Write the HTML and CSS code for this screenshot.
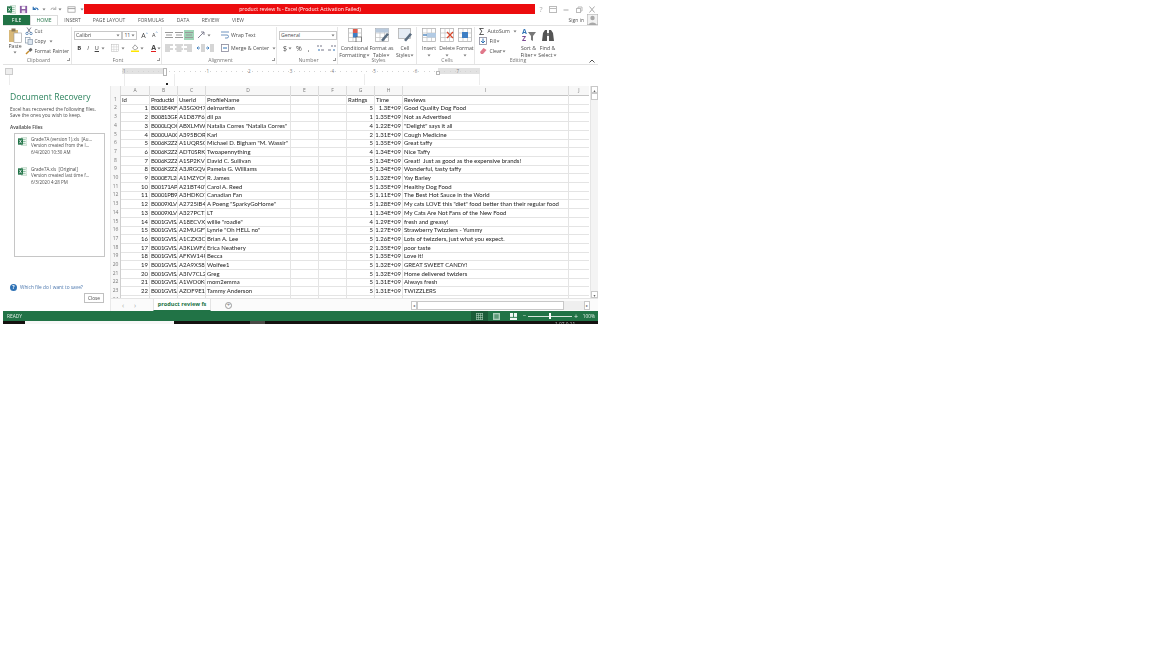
FILE: index.html
```html
<!DOCTYPE html>
<html lang="en">
<head>
  <meta charset="UTF-8">
  <title>product review fs - Excel</title>
  <link rel="stylesheet" href="styles.css">
</head>
<body>

  <svg class="defs" width="0" height="0">
    <symbol id="xl" viewBox="0 0 10 10">
      <rect x="4" y="1" width="6" height="8" fill="#fff" stroke="#7fb08f" stroke-width=".6"/>
      <path d="M5.5 3h3M5.5 5h3M5.5 7h3" stroke="#4d9a6b" stroke-width=".7"/>
      <rect x="0" y="1.5" width="5.5" height="7" fill="#1e7145"/>
      <path d="M1.4 3l2.6 4M4 3L1.4 7" stroke="#fff" stroke-width=".8"/>
    </symbol>
    <symbol id="caret" viewBox="0 0 4 3"><path d="M.5 .5h3L2 2.5z" fill="#777"/></symbol>
    <symbol id="lines" viewBox="0 0 8 8"><path d="M0 1.5h8M1 4h6M0 6.5h8" stroke="#999" stroke-width="1"/></symbol>
    <symbol id="grid" viewBox="0 0 14 14">
      <rect x=".5" y=".5" width="13" height="13" fill="#fff" stroke="#a8a8a8" stroke-width=".7"/>
      <path d="M.5 5h13M.5 9.5h13M5 .5v13M9.5 .5v13" stroke="#c2c2c2" stroke-width=".7"/>
    </symbol>
  </svg>

  <div class="app">

    <!-- title bar -->
    <div class="titlebar">
      <div class="qat">
        <svg class="qi" viewBox="0 0 10 10"><use href="#xl"/></svg>
        <svg class="qi" viewBox="0 0 10 10"><rect x="1" y="1" width="8" height="8" fill="#8a5ba3"/><rect x="3" y="1.5" width="4" height="3" fill="#fff"/><rect x="3" y="6" width="4" height="3" fill="#e6dcec"/></svg>
        <svg class="qi" viewBox="0 0 10 10"><path d="M2.5 2v3h3M3 5c1-2 4-2.500 5 .5" fill="none" stroke="#2f72b5" stroke-width="1.300"/></svg>
        <svg class="qc"><use href="#caret"/></svg>
        <svg class="qi gap" viewBox="0 0 10 10"><path d="M7.500 2v3h-3M7 5c-1-2-4-2.500-5 .5" fill="none" stroke="#bbb" stroke-width="1.200"/></svg>
        <svg class="qc"><use href="#caret"/></svg>
        <svg class="qi gap2" viewBox="0 0 10 10"><rect x="1" y="2" width="8" height="6" fill="#fff" stroke="#999" stroke-width=".8"/><path d="M1 4h8" stroke="#999"/></svg>
        <svg class="qc ml3"><use href="#caret"/></svg>
      </div>
      <div class="redbar">product review fs - Excel (Product Activation Failed)</div>
      <div class="winbtns">
        <span>?</span>
        <svg viewBox="0 0 8 7"><rect x=".5" y=".5" width="7" height="6" fill="none" stroke="#bbb"/><path d="M.5 2.500h7" stroke="#bbb"/></svg>
        <svg viewBox="0 0 8 7"><path d="M1.500 4h5" stroke="#aaa"/></svg>
        <svg viewBox="0 0 8 7"><rect x="1.500" y="2.500" width="4" height="4" fill="none" stroke="#bbb"/><path d="M3 2.500V1h4v4H5.500" fill="none" stroke="#bbb"/></svg>
        <svg viewBox="0 0 8 7"><path d="M1.500 .5l5 6M6.500 .5l-5 6" stroke="#aaa"/></svg>
      </div>
    </div>

    <!-- tabs -->
    <div class="tabs">
      <span class="tab file">FILE</span>
      <span class="tab home">HOME</span>
      <span class="tab t-insert">INSERT</span>
      <span class="tab t-page">PAGE LAYOUT</span>
      <span class="tab t-form">FORMULAS</span>
      <span class="tab t-data">DATA</span>
      <span class="tab t-rev">REVIEW</span>
      <span class="tab t-view">VIEW</span>
      <span class="signin">Sign in</span>
      <svg class="avatar" viewBox="0 0 11 11"><rect width="11" height="11" fill="#f2f2f2" stroke="#aaa"/><circle cx="5.500" cy="4" r="2.200" fill="#a8a8a8"/><path d="M1.500 11c0-3.500 8-3.500 8 0z" fill="#a8a8a8"/></svg>
    </div>

    <!-- ribbon -->
    <div class="ribbon">

      <div class="group g-clip">
        <div class="gbody clip-body">
          <div class="paste">
            <svg class="paste-ic" viewBox="0 0 14 15"><rect x="1" y="2" width="9" height="12" fill="#d8b878"/><rect x="3.500" y=".5" width="4" height="3" fill="#8a7a5a"/><rect x="6" y="5" width="7.500" height="9.500" fill="#fff" stroke="#999" stroke-width=".6"/></svg>
            <span>Paste</span>
            <svg class="car"><use href="#caret"/></svg>
          </div>
          <div class="clip-list">
            <div class="rrow"><svg class="si" viewBox="0 0 8 8"><path d="M2 .5l3.500 5M6 .5L2.500 5.500" stroke="#667" stroke-width=".8"/><circle cx="2" cy="6.500" r="1.200" fill="none" stroke="#3b6ea5" stroke-width=".7"/><circle cx="6" cy="6.500" r="1.200" fill="none" stroke="#3b6ea5" stroke-width=".7"/></svg>Cut</div>
            <div class="rrow"><svg class="si" viewBox="0 0 8 8"><rect x=".5" y=".5" width="4.500" height="5.500" fill="#fff" stroke="#89a" stroke-width=".7"/><rect x="3" y="2.500" width="4.500" height="5" fill="#dde6f0" stroke="#89a" stroke-width=".7"/></svg>Copy<svg class="car ml3"><use href="#caret"/></svg></div>
            <div class="rrow"><svg class="si" viewBox="0 0 8 8"><path d="M1 7l3-3" stroke="#c58a2a" stroke-width="1.400"/><path d="M3.500 2.500L6 .8 7.500 3 5 5z" fill="#666"/></svg>Format Painter</div>
          </div>
        </div>
        <div class="glabel">Clipboard<i class="launch"></i></div>
      </div>

      <div class="group g-font">
        <div class="gbody col">
          <div class="rrow r-a">
            <span class="combo c-font">Calibri<svg class="car"><use href="#caret"/></svg></span>
            <span class="combo c-size">11<svg class="car"><use href="#caret"/></svg></span>
            <span class="bigA">A<sup>^</sup></span>
            <span class="bigA small">A<sup>^</sup></span>
          </div>
          <div class="rrow r-b">
            <b class="fb">B</b><em class="fb">I</em><u class="fb">U</u><svg class="car"><use href="#caret"/></svg>
            <svg class="si ml6" viewBox="0 0 14 14"><use href="#grid"/></svg><svg class="car"><use href="#caret"/></svg>
            <svg class="si ml6" viewBox="0 0 8 8"><path d="M4 .8L7 4 4 6 1.500 4z" fill="#fff" stroke="#666" stroke-width=".6"/><rect y="6.500" width="8" height="1.500" fill="#ffe600"/></svg><svg class="car"><use href="#caret"/></svg>
            <span class="fontA">A</span><svg class="car"><use href="#caret"/></svg>
          </div>
        </div>
        <div class="glabel">Font<i class="launch"></i></div>
      </div>

      <div class="group g-align">
        <div class="gbody col">
          <div class="rrow r-a">
            <svg class="si" viewBox="0 0 8 8"><use href="#lines"/></svg>
            <svg class="si" viewBox="0 0 8 8"><use href="#lines"/></svg>
            <span class="active"><svg class="si" viewBox="0 0 8 8"><use href="#lines"/></svg></span>
            <svg class="si ml3" viewBox="0 0 8 8"><path d="M1 7l6-6M4 1h3v3" fill="none" stroke="#778" stroke-width=".9"/></svg><svg class="car"><use href="#caret"/></svg>
            <svg class="si ml10" viewBox="0 0 8 8"><path d="M0 1h8M0 4h6a1.500 1.500 0 010 3H4" fill="none" stroke="#4a7ab0" stroke-width=".8"/></svg>
            <span class="ml1">Wrap Text</span>
          </div>
          <div class="rrow r-b">
            <svg class="si" viewBox="0 0 8 8"><path d="M0 1h8M0 3h5M0 5h8M0 7h5" stroke="#999" stroke-width=".8"/></svg>
            <svg class="si" viewBox="0 0 8 8"><path d="M0 1h8M1.500 3h5M0 5h8M1.500 7h5" stroke="#999" stroke-width=".8"/></svg>
            <svg class="si" viewBox="0 0 8 8"><path d="M0 1h8M3 3h5M0 5h8M3 7h5" stroke="#999" stroke-width=".8"/></svg>
            <svg class="si ml3" viewBox="0 0 8 8"><path d="M4 1h4M4 3h4M4 5h4M4 7h4" stroke="#888" stroke-width=".7"/><path d="M3 4H0M1.500 2.500L0 4l1.500 1.500" fill="none" stroke="#2f72b5" stroke-width=".8"/></svg>
            <svg class="si" viewBox="0 0 8 8"><path d="M4 1h4M4 3h4M4 5h4M4 7h4" stroke="#888" stroke-width=".7"/><path d="M0 4h3M1.500 2.500L3 4 1.500 5.500" fill="none" stroke="#2f72b5" stroke-width=".8"/></svg>
            <svg class="si ml5" viewBox="0 0 8 8"><rect x=".5" y=".5" width="7" height="7" fill="#fff" stroke="#889" stroke-width=".8"/><path d="M2 4h4" stroke="#2f72b5"/></svg>
            <span class="ml1">Merge &amp; Center</span><svg class="car ml3"><use href="#caret"/></svg>
          </div>
        </div>
        <div class="glabel">Alignment<i class="launch"></i></div>
      </div>

      <div class="group g-num">
        <div class="gbody col">
          <div class="rrow r-a"><span class="combo c-gen">General<svg class="car"><use href="#caret"/></svg></span></div>
          <div class="rrow r-b num-row">
            <span class="sym">$</span><svg class="car"><use href="#caret"/></svg>
            <span class="sym ml4">%</span>
            <span class="sym ml5">,</span>
            <svg class="si ml6" viewBox="0 0 8 8"><path d="M0 2h2M3 2h2M4 6h3" stroke="#778"/><path d="M3 6H1" stroke="#2f72b5"/></svg>
            <svg class="si ml2" viewBox="0 0 8 8"><path d="M3 2h2M6 2h2M0 6h3" stroke="#778"/><path d="M7 6H5" stroke="#2f72b5"/></svg>
          </div>
        </div>
        <div class="glabel">Number<i class="launch"></i></div>
      </div>

      <div class="group g-styles">
        <div class="gbody bigs">
          <div class="big w-cf">
            <svg viewBox="0 0 14 14"><use href="#grid"/><rect x="5" y="1" width="4.500" height="4" fill="#e05b4c"/><rect x="5" y="5" width="4.500" height="4.500" fill="#3f7fc4"/><rect x="8" y="9" width="5.500" height="5" fill="#fff" stroke="#555" stroke-width=".7"/></svg>
            <span>Conditional<br>Formatting<svg class="car"><use href="#caret"/></svg></span>
          </div>
          <div class="big w-ft">
            <svg viewBox="0 0 14 14"><use href="#grid"/><rect x=".5" y=".5" width="13" height="4" fill="#b9cadd"/><path d="M6 12l6-7 2 1.500-6 7z" fill="#5a6d80"/></svg>
            <span>Format as<br>Table<svg class="car"><use href="#caret"/></svg></span>
          </div>
          <div class="big w-cs">
            <svg viewBox="0 0 14 14"><rect x=".5" y=".5" width="12" height="10" fill="#e6edf5" stroke="#a8a8a8" stroke-width=".7"/><path d="M6 12l6-7 2 1.500-6 7z" fill="#5a6d80"/></svg>
            <span>Cell<br>Styles<svg class="car"><use href="#caret"/></svg></span>
          </div>
        </div>
        <div class="glabel">Styles</div>
      </div>

      <div class="group g-cells">
        <div class="gbody bigs">
          <div class="big w-c">
            <svg viewBox="0 0 14 14"><use href="#grid"/><rect x="5" y="5" width="9" height="4.500" fill="#b3cbe4"/><path d="M1 7h4" stroke="#2f72b5" stroke-width="1.200"/></svg>
            <span>Insert<br><svg class="car"><use href="#caret"/></svg></span>
          </div>
          <div class="big w-c">
            <svg viewBox="0 0 14 14"><use href="#grid"/><path d="M7 4l6 6M13 4l-6 6" stroke="#d9472b" stroke-width="1.200"/></svg>
            <span>Delete<br><svg class="car"><use href="#caret"/></svg></span>
          </div>
          <div class="big w-c">
            <svg viewBox="0 0 14 14"><use href="#grid"/><rect x="4" y="4" width="6" height="6" fill="#3f7fc4"/></svg>
            <span>Format<br><svg class="car"><use href="#caret"/></svg></span>
          </div>
        </div>
        <div class="glabel">Cells</div>
      </div>

      <div class="group g-edit">
        <div class="gbody edit-body">
          <div class="edit-list">
            <div class="rrow"><span class="sigma">&Sigma;</span>AutoSum<svg class="car ml3"><use href="#caret"/></svg></div>
            <div class="rrow"><svg class="si" viewBox="0 0 8 8"><rect x=".5" y=".5" width="7" height="7" fill="#fff" stroke="#889" stroke-width=".8"/><path d="M4 1.500v4M2 4l2 2 2-2" fill="none" stroke="#2f72b5"/></svg><span class="ml1">Fill</span><svg class="car"><use href="#caret"/></svg></div>
            <div class="rrow"><svg class="si" viewBox="0 0 8 8"><path d="M1 5l3.500-4L7.500 3 4 7H2z" fill="#e0788a"/></svg><span class="ml1">Clear</span><svg class="car"><use href="#caret"/></svg></div>
          </div>
          <div class="big w-sort">
            <svg viewBox="0 0 14 14"><text class="az" x="0" y="6" fill="#2f72b5">A</text><text class="az" x="0" y="13" fill="#7b4a92">Z</text><path d="M6 4h8L11 8v5l-2-1V8z" fill="#777"/></svg>
            <span>Sort &amp;<br>Filter<svg class="car"><use href="#caret"/></svg></span>
          </div>
          <div class="big w-find">
            <svg viewBox="0 0 14 14"><path d="M1 13l1-8 2-3h2v11zM13 13l-1-8-2-3H8v11z" fill="#555"/><rect x="6" y="5" width="2" height="3" fill="#777"/></svg>
            <span>Find &amp;<br>Select<svg class="car"><use href="#caret"/></svg></span>
          </div>
        </div>
        <div class="glabel">Editing</div>
      </div>

      <svg class="collapse" viewBox="0 0 6 4"><path d="M.5 3.500L3 1l2.500 2.500" fill="none" stroke="#555"/></svg>
    </div>

    <!-- ruler -->
    <div class="ruler-row">
      <span class="selbox"></span>
      <div class="ruler">
        <span>1</span><span></span><span>1</span><span>2</span><span>3</span><span>4</span><span>5</span><span>6</span><span>7</span>
        <i class="marker m1"></i>
        <i class="marker m2"></i>
      </div>
      <i class="blackdot"></i>
    </div>

    <div class="main">

      <!-- recovery pane -->
      <aside class="pane">
        <h1>Document Recovery</h1>
        <p class="lead">Excel has recovered the following files.<br>Save the ones you wish to keep.</p>
        <h2>Available Files</h2>
        <div class="files">
          <div class="file-item">
            <svg class="xlicon"><use href="#xl"/></svg>
            <div>Grade7A (version 1).xls&nbsp; [Au...<br>Version created from the l...<br>6/4/2020 10:30 AM</div>
          </div>
          <div class="file-item">
            <svg class="xlicon"><use href="#xl"/></svg>
            <div>Grade7A.xls&nbsp; [Original]<br>Version created last time f...<br>6/3/2020 4:28 PM</div>
          </div>
        </div>
        <div class="which"><span class="qmark">?</span>Which file do I want to save?</div>
        <div class="closewrap"><span class="closebtn">Close</span></div>
      </aside>

      <!-- sheet -->
      <div class="sheetarea">
        <div class="gridwrap">
          <div class="sheet">
            <div class="row head"><span class="corner"></span><span>A</span><span>B</span><span>C</span><span>D</span><span>E</span><span>F</span><span>G</span><span>H</span><span>I</span><span>J</span></div>
            <div class="row"><span class="rh">1</span><span>Id</span><span>ProductId</span><span>UserId</span><span>ProfileName</span><span></span><span></span><span>Ratings</span><span>Time</span><span>Reviews</span><span></span></div>
            <div class="row"><span class="rh">2</span><span class="n">1</span><span>B001E4KFG0</span><span>A3SGXH7AUHU8GW</span><span>delmartian</span><span></span><span></span><span class="n">5</span><span class="n">1.3E+09</span><span>Good Quality Dog Food</span><span></span></div>
            <div class="row"><span class="rh">3</span><span class="n">2</span><span>B00813GRG4</span><span>A1D87F6ZCVE5NK</span><span>dll pa</span><span></span><span></span><span class="n">1</span><span class="n">1.35E+09</span><span>Not as Advertised</span><span></span></div>
            <div class="row"><span class="rh">4</span><span class="n">3</span><span>B000LQOCH0</span><span>ABXLMWJIXXAIN</span><span>Natalia Corres "Natalia Corres"</span><span></span><span></span><span class="n">4</span><span class="n">1.22E+09</span><span>"Delight" says it all</span><span></span></div>
            <div class="row"><span class="rh">5</span><span class="n">4</span><span>B000UA0QIQ</span><span>A395BORC6FGVXV</span><span>Karl</span><span></span><span></span><span class="n">2</span><span class="n">1.31E+09</span><span>Cough Medicine</span><span></span></div>
            <div class="row"><span class="rh">6</span><span class="n">5</span><span>B006K2ZZ7K</span><span>A1UQRSCLF8GW1T</span><span>Michael D. Bigham "M. Wassir"</span><span></span><span></span><span class="n">5</span><span class="n">1.35E+09</span><span>Great taffy</span><span></span></div>
            <div class="row"><span class="rh">7</span><span class="n">6</span><span>B006K2ZZ7K</span><span>ADT0SRK1MGOEU</span><span>Twoapennything</span><span></span><span></span><span class="n">4</span><span class="n">1.34E+09</span><span>Nice Taffy</span><span></span></div>
            <div class="row"><span class="rh">8</span><span class="n">7</span><span>B006K2ZZ7K</span><span>A1SP2KVKFXXRU1</span><span>David C. Sullivan</span><span></span><span></span><span class="n">5</span><span class="n">1.34E+09</span><span>Great!&nbsp; Just as good as the expensive brands!</span><span></span></div>
            <div class="row"><span class="rh">9</span><span class="n">8</span><span>B006K2ZZ7K</span><span>A3JRGQVEQN31IQ</span><span>Pamela G. Williams</span><span></span><span></span><span class="n">5</span><span class="n">1.34E+09</span><span>Wonderful, tasty taffy</span><span></span></div>
            <div class="row"><span class="rh">10</span><span class="n">9</span><span>B000E7L2R4</span><span>A1MZYO9TZK0BBI</span><span>R. James</span><span></span><span></span><span class="n">5</span><span class="n">1.32E+09</span><span>Yay Barley</span><span></span></div>
            <div class="row"><span class="rh">11</span><span class="n">10</span><span>B00171APVA</span><span>A21BT40VZCCYT4</span><span>Carol A. Reed</span><span></span><span></span><span class="n">5</span><span class="n">1.35E+09</span><span>Healthy Dog Food</span><span></span></div>
            <div class="row"><span class="rh">12</span><span class="n">11</span><span>B0001PB9FE</span><span>A3HDKO7OW0QNK4</span><span>Canadian Fan</span><span></span><span></span><span class="n">5</span><span class="n">1.11E+09</span><span>The Best Hot Sauce in the World</span><span></span></div>
            <div class="row"><span class="rh">13</span><span class="n">12</span><span>B0009XLVG0</span><span>A2725IB4YY9JEB</span><span>A Poeng "SparkyGoHome"</span><span></span><span></span><span class="n">5</span><span class="n">1.28E+09</span><span>My cats LOVE this "diet" food better than their regular food</span><span></span></div>
            <div class="row"><span class="rh">14</span><span class="n">13</span><span>B0009XLVG0</span><span>A327PCT23YH90</span><span>LT</span><span></span><span></span><span class="n">1</span><span class="n">1.34E+09</span><span>My Cats Are Not Fans of the New Food</span><span></span></div>
            <div class="row"><span class="rh">15</span><span class="n">14</span><span>B001GVISJM</span><span>A18ECVX2RJ7HUE</span><span>willie "roadie"</span><span></span><span></span><span class="n">4</span><span class="n">1.29E+09</span><span>fresh and greasy!</span><span></span></div>
            <div class="row"><span class="rh">16</span><span class="n">15</span><span>B001GVISJM</span><span>A2MUGFV2TDQ47K</span><span>Lynrie "Oh HELL no"</span><span></span><span></span><span class="n">5</span><span class="n">1.27E+09</span><span>Strawberry Twizzlers - Yummy</span><span></span></div>
            <div class="row"><span class="rh">17</span><span class="n">16</span><span>B001GVISJM</span><span>A1CZX3CP8IKQIJ</span><span>Brian A. Lee</span><span></span><span></span><span class="n">5</span><span class="n">1.26E+09</span><span>Lots of twizzlers, just what you expect.</span><span></span></div>
            <div class="row"><span class="rh">18</span><span class="n">17</span><span>B001GVISJM</span><span>A3KLWF6WQ5BNYO</span><span>Erica Neathery</span><span></span><span></span><span class="n">2</span><span class="n">1.35E+09</span><span>poor taste</span><span></span></div>
            <div class="row"><span class="rh">19</span><span class="n">18</span><span>B001GVISJM</span><span>AFKW14U97Z6QO</span><span>Becca</span><span></span><span></span><span class="n">5</span><span class="n">1.35E+09</span><span>Love it!</span><span></span></div>
            <div class="row"><span class="rh">20</span><span class="n">19</span><span>B001GVISJM</span><span>A2A9X58G2GTBLP</span><span>Wolfee1</span><span></span><span></span><span class="n">5</span><span class="n">1.32E+09</span><span>GREAT SWEET CANDY!</span><span></span></div>
            <div class="row"><span class="rh">21</span><span class="n">20</span><span>B001GVISJM</span><span>A3IV7CL2C13K2U</span><span>Greg</span><span></span><span></span><span class="n">5</span><span class="n">1.32E+09</span><span>Home delivered twizlers</span><span></span></div>
            <div class="row"><span class="rh">22</span><span class="n">21</span><span>B001GVISJM</span><span>A1WO0KGLPR5PV6</span><span>mom2emma</span><span></span><span></span><span class="n">5</span><span class="n">1.31E+09</span><span>Always fresh</span><span></span></div>
            <div class="row"><span class="rh">23</span><span class="n">22</span><span>B001GVISJM</span><span>AZOF9E17RGZH8</span><span>Tammy Anderson</span><span></span><span></span><span class="n">5</span><span class="n">1.31E+09</span><span>TWIZZLERS</span><span></span></div>
            <div class="row"><span class="rh">24</span><span class="n">23</span><span>B001GVISJM</span><span>ARYVQL4N737A1</span><span>Charles Brown</span><span></span><span></span><span class="n">5</span><span class="n">1.35E+09</span><span>Delicious product!</span><span></span></div>
          </div>
          <div class="vscroll">
            <span class="sb-btn">&#9650;</span>
            <span class="sb-thumb"></span>
            <span class="sb-fill"></span>
            <span class="sb-btn">&#9660;</span>
          </div>
        </div>

        <div class="sheettabs">
          <span class="nav">&lsaquo;</span>
          <span class="nav">&rsaquo;</span>
          <span class="stab">product review fs</span>
          <span class="addsheet">+</span>
          <div class="hscroll">
            <span class="hb">&#9666;</span>
            <span class="hthumb"></span>
            <span class="hb right">&#9656;</span>
          </div>
        </div>
      </div>
    </div>

    <!-- status bar -->
    <div class="status">
      <span class="ready">READY</span>
      <span class="viewbtn on"><svg viewBox="0 0 8 8"><path d="M0 .5h8M0 2.800h8M0 5.200h8M0 7.500h8M.5 0v8M2.800 0v8M5.200 0v8M7.500 0v8" stroke="#a9cdb8" stroke-width=".7"/></svg></span>
      <span class="viewbtn"><svg viewBox="0 0 8 8"><rect width="8" height="8" fill="#a9cdb8"/><path d="M1.500 1.500h5v5h-5z" fill="#5e9a78"/></svg></span>
      <span class="viewbtn"><svg viewBox="0 0 8 8"><rect width="8" height="8" fill="#f2f7f4"/><path d="M4 0v5M0 5h8" stroke="#217346"/></svg></span>
      <span class="zoomminus">&minus;</span>
      <span class="slider"><i></i></span>
      <span class="zoomplus">+</span>
      <span class="pct">100%</span>
    </div>

    <!-- what lies behind the window -->
    <div class="behind">
      <span class="b-white"></span>
      <span class="b-grey"></span>
      <span class="b-text">1.07.0 11</span>
    </div>
  </div>

</body>
</html>
```

FILE: styles.css
```css
* {
  box-sizing: border-box;
}

body {
  margin: 0;
  background: white;
  height: 648px;
  overflow: hidden;
  font-family: "Open Sans", sans-serif;
  color: #4c4c4c;
}

.defs {
  display: block;
  height: 0;
}

.app {
  width: 595px;
  margin: 3px 0 0 3px;
  font-size: 5.2px;
  line-height: 7px;
  filter: blur(0.3px);
}

.car {
  width: 4px;
  height: 3px;
  flex: none;
  vertical-align: middle;
}

.ml1 { margin-left: 1px; }
.ml2 { margin-left: 2px; }
.ml3 { margin-left: 3px; }
.ml4 { margin-left: 4px; }
.ml5 { margin-left: 5px; }
.ml6 { margin-left: 6px; }
.ml10 { margin-left: 10px; }

/* title bar */
.titlebar {
  display: flex;
  height: 12px;
  padding-top: 1px;
}

.qat {
  width: 81px;
  display: flex;
  align-items: center;
  padding-left: 4px;
}

.qi {
  width: 9px;
  height: 9px;
  margin-right: 3px;
  flex: none;
}

.qi.gap {
  margin-left: 3px;
  margin-right: 1px;
}

.qi.gap2 {
  margin-left: 5px;
  margin-right: 1px;
}

.qc {
  width: 4px;
  height: 3px;
  margin-left: -1px;
  flex: none;
}

.qc.ml3 {
  margin-left: 3px;
}

.redbar {
  width: 451px;
  height: 10px;
  padding-right: 19px;
  background: #ec0c0e;
  color: #fff;
  text-align: center;
  line-height: 10px;
  font-size: 5.15px;
}

.winbtns {
  flex: 1;
  display: flex;
  align-items: center;
  height: 10px;
  padding-left: 3px;
  gap: 5px;
  color: #aaa;
  font-size: 7px;
}

.winbtns span {
  width: 6px;
  text-align: center;
}

.winbtns svg {
  width: 8px;
  height: 7px;
}

/* tabs */
.tabs {
  display: flex;
  align-items: center;
  height: 10px;
  font-size: 5px;
  color: #555;
}

.tab {
  text-align: center;
  line-height: 10px;
}

.file {
  width: 27px;
  background: #217346;
  color: #fff;
}

.home {
  width: 28px;
  height: 11px;
  color: #217346;
  background: #fff;
  border: 1px solid #dcdcdc;
  border-bottom: none;
  line-height: 9px;
}

.t-insert { width: 29px; }
.t-page { width: 44px; }
.t-form { width: 40px; }
.t-data { width: 24px; }
.t-rev { width: 31px; }
.t-view { width: 24px; }

.signin {
  margin-left: auto;
  margin-right: 3px;
}

.avatar {
  width: 11px;
  height: 11px;
  margin-top: -2px;
}

/* ribbon */
.ribbon {
  display: flex;
  height: 40px;
  border-top: 1px solid #e2e2e2;
  border-bottom: 1px solid #e2e2e2;
  position: relative;
}

.group {
  display: flex;
  flex-direction: column;
  border-right: 1px solid #e6e6e6;
  margin: 1px 0 0;
  padding-left: 3px;
}

.g-clip { width: 69px; }
.g-font { width: 90px; }
.g-align { width: 115px; }
.g-num { width: 61px; }
.g-styles { width: 79px; }
.g-cells { width: 58px; }
.g-edit { width: 83px; border-right: none; }

.gbody {
  flex: 1;
  min-height: 0;
}

.gbody.col {
  padding-top: 3px;
}

.glabel {
  height: 8px;
  line-height: 8px;
  text-align: center;
  color: #777;
  position: relative;
}

.launch {
  position: absolute;
  right: 1px;
  top: 2px;
  width: 3px;
  height: 3px;
  border-right: 1px solid #999;
  border-bottom: 1px solid #999;
}

.rrow {
  display: flex;
  align-items: center;
  white-space: nowrap;
  height: 10px;
}

.si {
  width: 8px;
  height: 8px;
  margin-right: 1.5px;
  flex: none;
}

.clip-body {
  display: flex;
}

.paste {
  width: 16px;
  margin-left: 1px;
  display: flex;
  flex-direction: column;
  align-items: center;
  text-align: center;
}

.paste-ic {
  width: 14px;
  height: 15px;
  margin-top: 1px;
}

.paste .car {
  margin-top: 1px;
}

.clip-list {
  margin: -1px 0 0 2px;
  font-size: 4.95px;
}

.combo {
  display: flex;
  align-items: center;
  justify-content: space-between;
  border: 1px solid #c8c8c8;
  height: 9px;
  padding: 0 1px;
  background: #fff;
}

.c-font {
  width: 49px;
  margin-left: -1px;
}

.c-size {
  width: 15px;
}

.bigA {
  font-size: 7px;
  margin-left: 4px;
  width: 9px;
  color: #444;
}

.bigA.small {
  font-size: 5.5px;
  margin-left: 2px;
}

.bigA sup {
  font-size: 4px;
  color: #2f72b5;
  line-height: 0;
}

.fb {
  width: 9px;
  text-align: center;
  font-size: 6px;
  color: #444;
}

.fontA {
  font-size: 7px;
  font-weight: bold;
  color: #444;
  border-bottom: 1.5px solid #e31b1b;
  line-height: 7px;
  margin-left: 7px;
  margin-right: 1px;
}

.r-b {
  margin-top: 3px;
}

.active {
  display: flex;
  align-items: center;
  justify-content: center;
  background: #9fd5b7;
  width: 10px;
  height: 10px;
}

.active .si {
  margin: 0;
}

.c-gen {
  width: 58px;
  margin-left: -1px;
}

.num-row {
  padding-left: 3px;
}

.sym {
  font-size: 7px;
  color: #444;
  margin-right: 1px;
}

.bigs {
  display: flex;
}

.big {
  display: flex;
  flex-direction: column;
  align-items: center;
  text-align: center;
  white-space: nowrap;
  line-height: 7px;
}

.big > svg {
  width: 14px;
  height: 14px;
  margin: 1px 0 3px;
  flex: none;
}

.w-cf { width: 27px; }
.w-ft { width: 27px; }
.w-cs { width: 20px; }
.w-c { width: 18px; }
.w-sort { width: 19px; margin-left: 1px; }
.w-find { width: 19px; }

.az {
  font-size: 7px;
  font-weight: bold;
}

.edit-body {
  display: flex;
}

.edit-list {
  width: 40px;
  margin-top: -1px;
  padding-left: 1px;
}

.sigma {
  font-size: 9px;
  color: #333;
  width: 8.5px;
}

.collapse {
  position: absolute;
  right: 3px;
  bottom: 1px;
  width: 6px;
  height: 4px;
}

/* ruler */
.ruler-row {
  height: 21px;
  padding: 3px 0 0 2px;
  display: flex;
  align-items: flex-start;
  position: relative;
  background:
    linear-gradient(#ececec, #ececec) 121px 9px / 1px 12px no-repeat,
    linear-gradient(#ececec, #ececec) 171px 9px / 1px 12px no-repeat,
    linear-gradient(#ececec, #ececec) 361px 3px / 1px 17px no-repeat,
    linear-gradient(#ececec, #ececec) 476px 3px / 1px 17px no-repeat,
    linear-gradient(#ececec, #ececec) 6px 9px / 1px 11px no-repeat;
}

.selbox {
  width: 8px;
  height: 7px;
  background: #eee;
  border: 1px solid #ccc;
  margin-right: 109px;
}

.ruler {
  width: 358px;
  height: 6px;
  display: flex;
  position: relative;
  padding-left: 1px;
  font-size: 4.5px;
  line-height: 6px;
  color: #777;
  background:
    repeating-linear-gradient(to right, #d4d4d4 0 1px, transparent 1px 5.2px) 0 2.5px / 100% 1px no-repeat,
    linear-gradient(to right, #e2e2e2 43px, #fff 43px, #fff 316px, #e2e2e2 316px);
}

.ruler span {
  width: 41.7px;
  flex: none;
}

.marker {
  position: absolute;
  top: 0;
  width: 4px;
  height: 8px;
  background: #fff;
  border: 1px solid #b5b5b5;
}

.m1 { left: 41px; }
.m2 { left: 314px; top: 3px; height: 4px; }

.blackdot {
  position: absolute;
  left: 163px;
  top: 18px;
  width: 2px;
  height: 2px;
  background: #222;
}

/* main */
.main {
  display: flex;
  height: 225px;
}

.pane {
  width: 107px;
  padding: 5px 6px 0 7px;
  display: flex;
  flex-direction: column;
}

.pane h1 {
  font-size: 8.6px;
  font-weight: 400;
  line-height: 12px;
  color: #2f8560;
  margin: 0;
  white-space: nowrap;
}

.lead {
  margin: 3px 0 0;
  line-height: 6.2px;
  font-size: 4.8px;
  white-space: nowrap;
}

.pane h2 {
  font-size: 4.8px;
  line-height: 7px;
  font-weight: 600;
  margin: 6px 0 0;
  color: #444;
}

.files {
  height: 124px;
  width: 91px;
  margin: 1.5px 0 0 4px;
  border: 1px solid #c6c6c6;
  padding: 2px 0 0 3px;
  line-height: 6.5px;
  font-size: 4.5px;
  white-space: nowrap;
}

.file-item {
  display: flex;
  height: 30px;
  gap: 4px;
}

.xlicon {
  width: 9px;
  height: 9px;
  flex: none;
  margin-top: 1px;
}

.which {
  display: flex;
  align-items: center;
  margin-top: 27px;
  color: #4a76ad;
  font-size: 4.8px;
}

.qmark {
  width: 7px;
  height: 7px;
  border-radius: 50%;
  background: #2f72b5;
  color: #fff;
  font-size: 5px;
  font-weight: bold;
  text-align: center;
  line-height: 7px;
  margin-right: 3px;
}

.closewrap {
  display: flex;
  justify-content: flex-end;
  margin-top: 2px;
}

.closebtn {
  width: 20px;
  height: 10px;
  border: 1px solid #c0c0c0;
  text-align: center;
  line-height: 8px;
  font-size: 4.8px;
}

/* sheet */
.sheetarea {
  width: 488px;
  display: flex;
  flex-direction: column;
  border-left: 1px solid #e9e9e9;
}

.gridwrap {
  height: 212px;
  display: flex;
}

.sheet {
  width: 479px;
  overflow: hidden;
  font-family: Lato, "Liberation Sans", sans-serif;
  font-size: 5.97px;
  color: #222;
}

.row {
  display: grid;
  grid-template-columns: 10px 29px 28px 28px 85px 28px 28px 28px 28px 166px 21px;
  height: 8.714px;
  line-height: 9px;
}

/* long ids are cut at the cell edge, descenders may hang over the gridline */
.row span {
  overflow-x: clip;
  overflow-y: visible;
  white-space: nowrap;
  padding-left: 1px;
  border-right: 1px solid #e4e4e4;
  border-bottom: 1px solid #e4e4e4;
}

.row span:nth-child(3) {
  letter-spacing: -0.3px;
}

.row span.n {
  text-align: right;
  padding: 0 1px 0 0;
}

.row span.rh {
  text-align: center;
  padding: 0;
  color: #777;
  background: #f7f7f7;
  border-right-color: #cfcfcf;
  font-family: "Open Sans", sans-serif;
  font-size: 5px;
}

.row.head span {
  text-align: center;
  padding: 0;
  color: #777;
  background: #f7f7f7;
  border-right-color: #dcdcdc;
  border-bottom-color: #c4c4c4;
  font-family: "Open Sans", sans-serif;
  font-size: 5px;
}

.vscroll {
  width: 8px;
  display: flex;
  flex-direction: column;
  margin-left: 1px;
  background: #f4f4f4;
  border-left: 1px solid #e6e6e6;
}

.sb-btn {
  height: 7px;
  line-height: 7px;
  font-size: 3.5px;
  text-align: center;
  color: #666;
  background: #fff;
  border: 1px solid #c8c8c8;
  flex: none;
}

.sb-thumb {
  height: 7px;
  background: #fff;
  border: 1px solid #c8c8c8;
  flex: none;
}

.sb-fill {
  flex: 1;
}

.sheettabs {
  height: 13px;
  display: flex;
  align-items: center;
  background: #fbfbfb;
  border-top: 1px solid #e4e4e4;
  position: relative;
}

.nav {
  width: 12px;
  text-align: center;
  color: #aaa;
  font-size: 7px;
}

.nav:first-child {
  margin-left: 6px;
}

.stab {
  width: 58px;
  height: 12px;
  margin-left: 12px;
  text-align: center;
  background: #fff;
  color: #217346;
  font-weight: 700;
  font-size: 5.6px;
  line-height: 11px;
  border-bottom: 1.5px solid #217346;
  border-left: 1px solid #e4e4e4;
  border-right: 1px solid #e4e4e4;
}

.addsheet {
  width: 7px;
  height: 7px;
  margin-left: 14px;
  border: 1px solid #999;
  border-radius: 50%;
  color: #777;
  font-size: 6px;
  line-height: 5px;
  text-align: center;
}

.hscroll {
  width: 179px;
  height: 9px;
  margin-left: auto;
  margin-right: 8px;
  display: flex;
  background: #efefef;
}

.hb {
  width: 6px;
  background: #fff;
  border: 1px solid #c8c8c8;
  text-align: center;
  font-size: 4px;
  line-height: 7px;
  color: #666;
  flex: none;
}

.hb.right {
  margin-left: auto;
}

.hthumb {
  width: 147px;
  background: #fff;
  border: 1px solid #c8c8c8;
}

/* status bar */
.status {
  height: 10px;
  background: #217346;
  color: #e6f0ea;
  display: flex;
  align-items: center;
  font-size: 4.8px;
}

.ready {
  width: 468px;
  padding-left: 4px;
}

.viewbtn {
  width: 17px;
  height: 10px;
  display: flex;
  align-items: center;
  justify-content: center;
}

.viewbtn.on {
  background: #1a5c38;
}

.viewbtn svg {
  width: 7px;
  height: 7px;
}

.zoomminus {
  width: 5px;
  text-align: center;
  font-size: 6px;
}

.slider {
  width: 44px;
  height: 1px;
  background: #d5e5db;
  margin-left: 1px;
  display: flex;
  justify-content: center;
  align-items: center;
}

.slider i {
  width: 2px;
  height: 6px;
  flex: none;
  background: #fff;
}

.zoomplus {
  width: 6px;
  margin-left: 1px;
  text-align: center;
  font-size: 7px;
}

.pct {
  margin-left: auto;
  margin-right: 3px;
}

/* behind the window */
.behind {
  height: 3px;
  background: #14110f;
  display: flex;
  overflow: hidden;
}

.b-white {
  width: 149px;
  margin-left: 22px;
  background: #f7f7f7;
}

.b-grey {
  width: 15px;
  margin-left: 76px;
  background: #4a4a46;
}

.b-text {
  margin-left: 290px;
  font-size: 4.8px;
  line-height: 6px;
  color: #bbb;
}
```
